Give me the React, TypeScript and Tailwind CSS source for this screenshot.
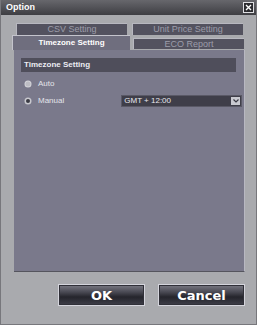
import React from "react";

const F = { fontFamily: '"Liberation Sans", Arial, sans-serif' };

function Tab({ label, active, className }: { label: string; active?: boolean; className: string }) {
  return (
    <div
      className={
        "flex items-center justify-center leading-none " +
        (active
          ? "bg-[#6f6e7e] text-white font-bold text-[8px] border-t border-l border-[#c4c4cc] "
          : "bg-[#53525f] text-[#9d9daa] text-[9px] border-t border-l border-[#b8b8c0] ") +
        className
      }
    >
      {label}
    </div>
  );
}

function Radio({ selected }: { selected?: boolean }) {
  return (
    <svg width="8" height="8" viewBox="0 0 8 8">
      {selected ? (
        <>
          <circle cx="4" cy="4" r="3.5" fill="#c9c9cf" />
          <circle cx="4" cy="4" r="2" fill="#3a3a44" />
        </>
      ) : (
        <>
          <circle cx="4" cy="4" r="3.5" fill="#d4d4da" />
          <circle cx="4" cy="4" r="2.5" fill="#bdbdc4" />
        </>
      )}
    </svg>
  );
}

function Btn({ label }: { label: string }) {
  return (
    <div
      className="w-[87px] h-[22px] border border-[#d4d4dc] flex items-center justify-center text-white font-bold text-[13px] leading-none bg-[linear-gradient(to_bottom,#7a7a84_0%,#4a4a54_35%,#25252c_60%,#3e3e48_100%)] shadow-[inset_0_0_0_1px_#303038]"
      style={{ fontFamily: '"DejaVu Sans", Verdana, sans-serif' }}
    >
      {label}
    </div>
  );
}

export default function App() {
  return (
    <div className="w-[257px] h-[325px] bg-[#a9aaae] flex flex-col border-l border-r border-b border-[#77777c]" style={F}>
      <div className="h-[15px] flex items-center justify-between pl-[5px] pr-[2px] bg-[linear-gradient(to_bottom,#67676c,#3e3e43)]">
        <span className="text-white font-bold text-[9px] leading-none">Option</span>
        <div className="w-[11px] h-[11px] border border-[#e0e0e4] bg-[#2c2c30] flex items-center justify-center">
          <svg width="7" height="7" viewBox="0 0 7 7">
            <path d="M1 1L6 6M6 1L1 6" stroke="#fff" strokeWidth="1.4" />
          </svg>
        </div>
      </div>

      <div className="mt-[8px] flex ml-[15px] gap-[5px]">
        <Tab label="CSV Setting" className="w-[111px] h-[12px]" />
        <Tab label="Unit Price Setting" className="w-[111px] h-[12px]" />
      </div>
      <div className="flex ml-[11px] h-[15px]">
        <Tab label="Timezone Setting" active className="w-[118px] h-[15px]" />
        <Tab label="ECO Report" className="ml-[3px] mt-[3px] w-[111px] h-[11px]" />
      </div>

      <div className="ml-[13px] w-[231px] h-[222px] bg-[#7a798b] border-r border-[#b8b8c2] border-b border-b-[#55555e] flex flex-col">
        <div className="mt-[8px] ml-[7px] w-[215px] h-[14px] bg-[#4f4e5b] flex items-center pl-[3px] text-[8px] font-bold text-[#ececf2] leading-none">
          Timezone Setting
        </div>
        <div className="mt-[7px] ml-[10px] flex items-center h-[10px] gap-[6px] text-[8px] text-[#e4e4ea] leading-none">
          <Radio />
          <span>Auto</span>
        </div>
        <div className="mt-[6px] ml-[10px] flex items-center h-[12px] text-[8px] text-[#e4e4ea] leading-none">
          <Radio selected />
          <span className="ml-[6px]">Manual</span>
          <div className="ml-[57px] w-[121px] h-[12px] bg-[#3f3e49] border border-[#5a5966] flex items-center justify-between pl-[2px] pr-[1px]">
            <span className="text-[#e8e8ee]">GMT + 12:00</span>
            <div className="w-[9px] h-[8px] bg-[#c9c9d0] flex items-center justify-center">
              <svg width="6" height="4" viewBox="0 0 6 4">
                <path d="M0.5 0.5L3 3L5.5 0.5" stroke="#3a3a44" strokeWidth="1.2" fill="none" />
              </svg>
            </div>
          </div>
        </div>
      </div>

      <div className="mt-[12px] ml-[57px] flex gap-[13px]">
        <Btn label="OK" />
        <Btn label="Cancel" />
      </div>
    </div>
  );
}
